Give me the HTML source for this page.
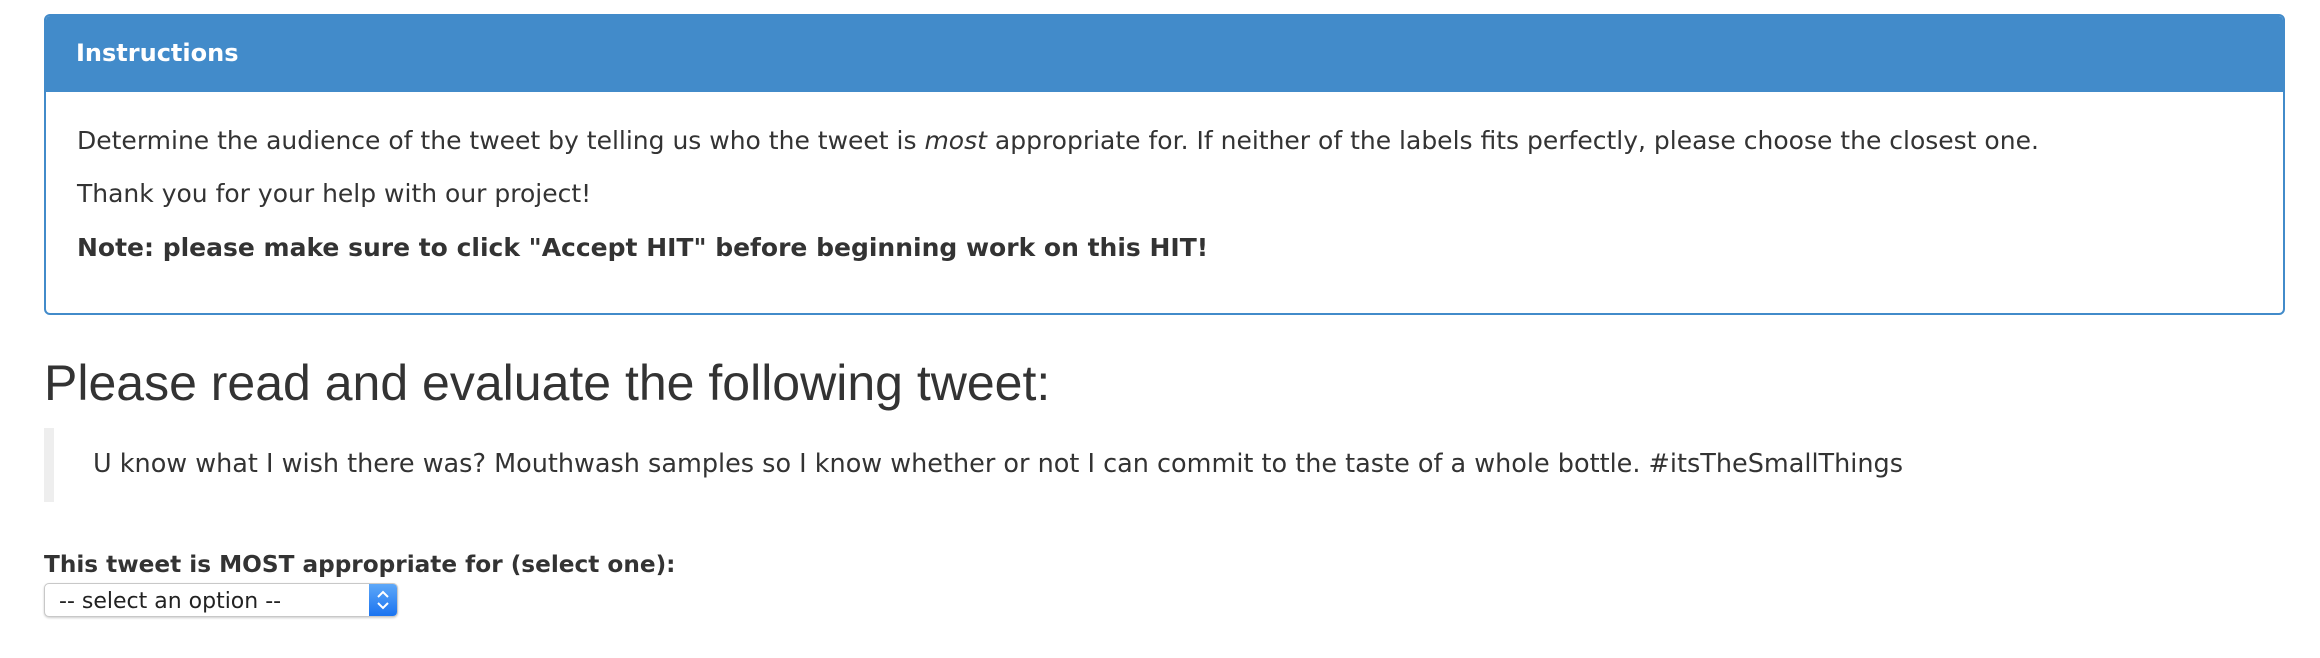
<!DOCTYPE html>
<html><head><style>
body{margin:0;width:2320px;height:658px;background:#fff;font-family:"DejaVu Sans","Liberation Sans",sans-serif;color:#333;position:relative;overflow:hidden}
.panel{position:absolute;left:44px;top:14px;width:2241px;height:301px;border:2px solid #428bca;border-radius:6px;overflow:hidden;box-sizing:border-box}
.ph{background:#428bca;height:78px;color:#fff;font-weight:bold;font-size:24px;line-height:78px;padding-left:30px;margin-top:-2px}
.t{position:absolute;left:31px;font-size:25px;white-space:nowrap;line-height:1}
h2{position:absolute;left:44px;top:355px;margin:0;font:50px "Liberation Sans",sans-serif;color:#333;line-height:56px}
.bq{position:absolute;left:44px;top:428px;width:10px;height:74px;background:#eee}
.sel{position:absolute;left:44px;top:583px;width:354px;height:34px;border:1px solid #c8c8c8;border-radius:5px;box-sizing:border-box;background:#fff;box-shadow:0 1px 2px rgba(0,0,0,.2);overflow:hidden}
.arr{position:absolute;right:0;top:0;width:28px;height:100%;background:linear-gradient(#5ea8f8,#1a73f0)}
</style></head><body>
<div class="panel"><div class="ph">Instructions</div>
<div class="t" style="top:112px">Determine the audience of the tweet by telling us who the tweet is <i>most</i> appropriate for. If neither of the labels fits perfectly, please choose the closest one.</div>
<div class="t" style="top:165px">Thank you for your help with our project!</div>
<div class="t" style="top:219px;font-weight:bold">Note: please make sure to click "Accept HIT" before beginning work on this HIT!</div>
</div>
<h2>Please read and evaluate the following tweet:</h2>
<div class="bq"></div>
<div class="t" style="left:93px;top:452px;font-size:25.5px">U know what I wish there was? Mouthwash samples so I know whether or not I can commit to the taste of a whole bottle. #itsTheSmallThings</div>
<div class="t" style="left:44px;top:553px;font-weight:bold;font-size:23.2px">This tweet is MOST appropriate for (select one):</div>
<div class="sel"><span style="position:absolute;left:14px;top:5px;font-size:22px;color:#222">-- select an option --</span>
<div class="arr"><svg width="28" height="32" viewBox="0 0 28 32"><path d="M9 13l5-5 5 5M9 19l5 5 5-5" stroke="#fff" stroke-width="2" fill="none"/></svg></div></div>
</body></html>
